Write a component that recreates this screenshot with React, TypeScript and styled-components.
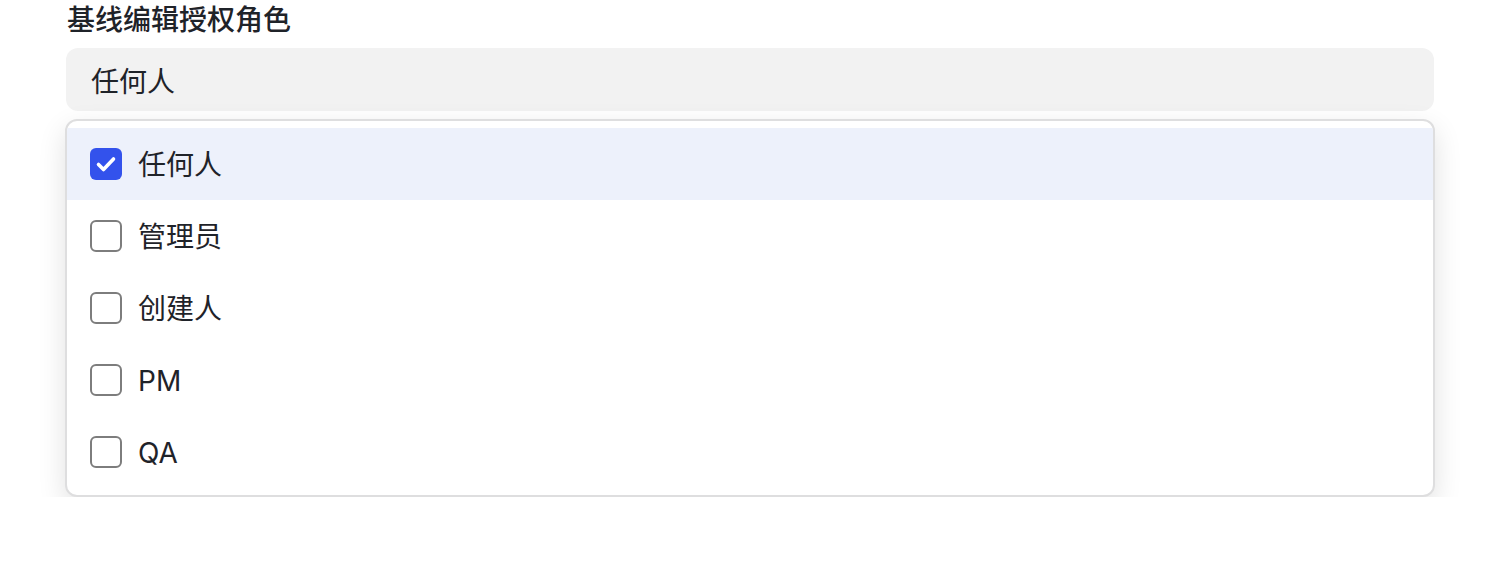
import React, { useState } from "react";
import styled, { createGlobalStyle } from "styled-components";

const Global = createGlobalStyle`
  html, body { margin: 0; padding: 0; background: #ffffff; }
  body { font-family: "Inter", "Noto Sans CJK SC", sans-serif; color: #1f2329; }
`;

const Page = styled.div`
  padding: 0 66px;
  width: 1500px;
  box-sizing: border-box;
`;

const Label = styled.div`
  font-size: 28px;
  font-weight: 500;
  line-height: 40px;
  height: 40px;
  color: #1f2329;
  margin-bottom: 8px;
  padding-left: 1px;
`;

const Field = styled.div`
  height: 63px;
  border-radius: 12px;
  background: #f2f2f2;
  display: flex;
  align-items: center;
  padding: 0 25px;
  font-size: 28px;
  color: #1f2329;
  box-sizing: border-box;
`;

const Menu = styled.div`
  margin: 8px -1px 0;
  border: 2px solid #dededf;
  border-radius: 12px;
  background: #ffffff;
  padding: 7px 0;
  box-shadow: 0 10px 28px rgba(0, 0, 0, 0.12);
  overflow: hidden;
`;

const Row = styled.div<{ $selected: boolean }>`
  height: 72px;
  display: flex;
  align-items: center;
  gap: 16px;
  padding-left: 23px;
  background: ${(p) => (p.$selected ? "#edf1fb" : "transparent")};
  font-size: 28px;
  color: #1f2329;
  cursor: pointer;
`;

const Box = styled.span<{ $checked: boolean }>`
  width: 32px;
  height: 32px;
  border-radius: 6px;
  box-sizing: border-box;
  border: ${(p) => (p.$checked ? "none" : "2px solid #7d7d7d")};
  background: ${(p) => (p.$checked ? "#3352ec" : "#ffffff")};
  display: flex;
  align-items: center;
  justify-content: center;
  flex: none;
`;

const Text = styled.span`
  line-height: 1;
  padding-top: 2px;
`;

const options = ["任何人", "管理员", "创建人", "PM", "QA"];

export default function App() {
  const [sel, setSel] = useState<string[]>(["任何人"]);
  const toggle = (o: string) =>
    setSel((s) => (s.includes(o) ? s.filter((x) => x !== o) : [...s, o]));
  return (
    <Page>
      <Global />
      <Label>基线编辑授权角色</Label>
      <Field>{sel.join("、") || "任何人"}</Field>
      <Menu>
        {options.map((o) => {
          const c = sel.includes(o);
          return (
            <Row key={o} $selected={c} onClick={() => toggle(o)}>
              <Box $checked={c}>
                {c && (
                  <svg width="32" height="32" viewBox="0 0 32 32">
                    <path
                      d="M8.5 16.5 L13.5 21.5 L23.5 11"
                      fill="none"
                      stroke="#ffffff"
                      strokeWidth="3.6"
                      strokeLinecap="round"
                      strokeLinejoin="round"
                    />
                  </svg>
                )}
              </Box>
              <Text>{o}</Text>
            </Row>
          );
        })}
      </Menu>
    </Page>
  );
}
